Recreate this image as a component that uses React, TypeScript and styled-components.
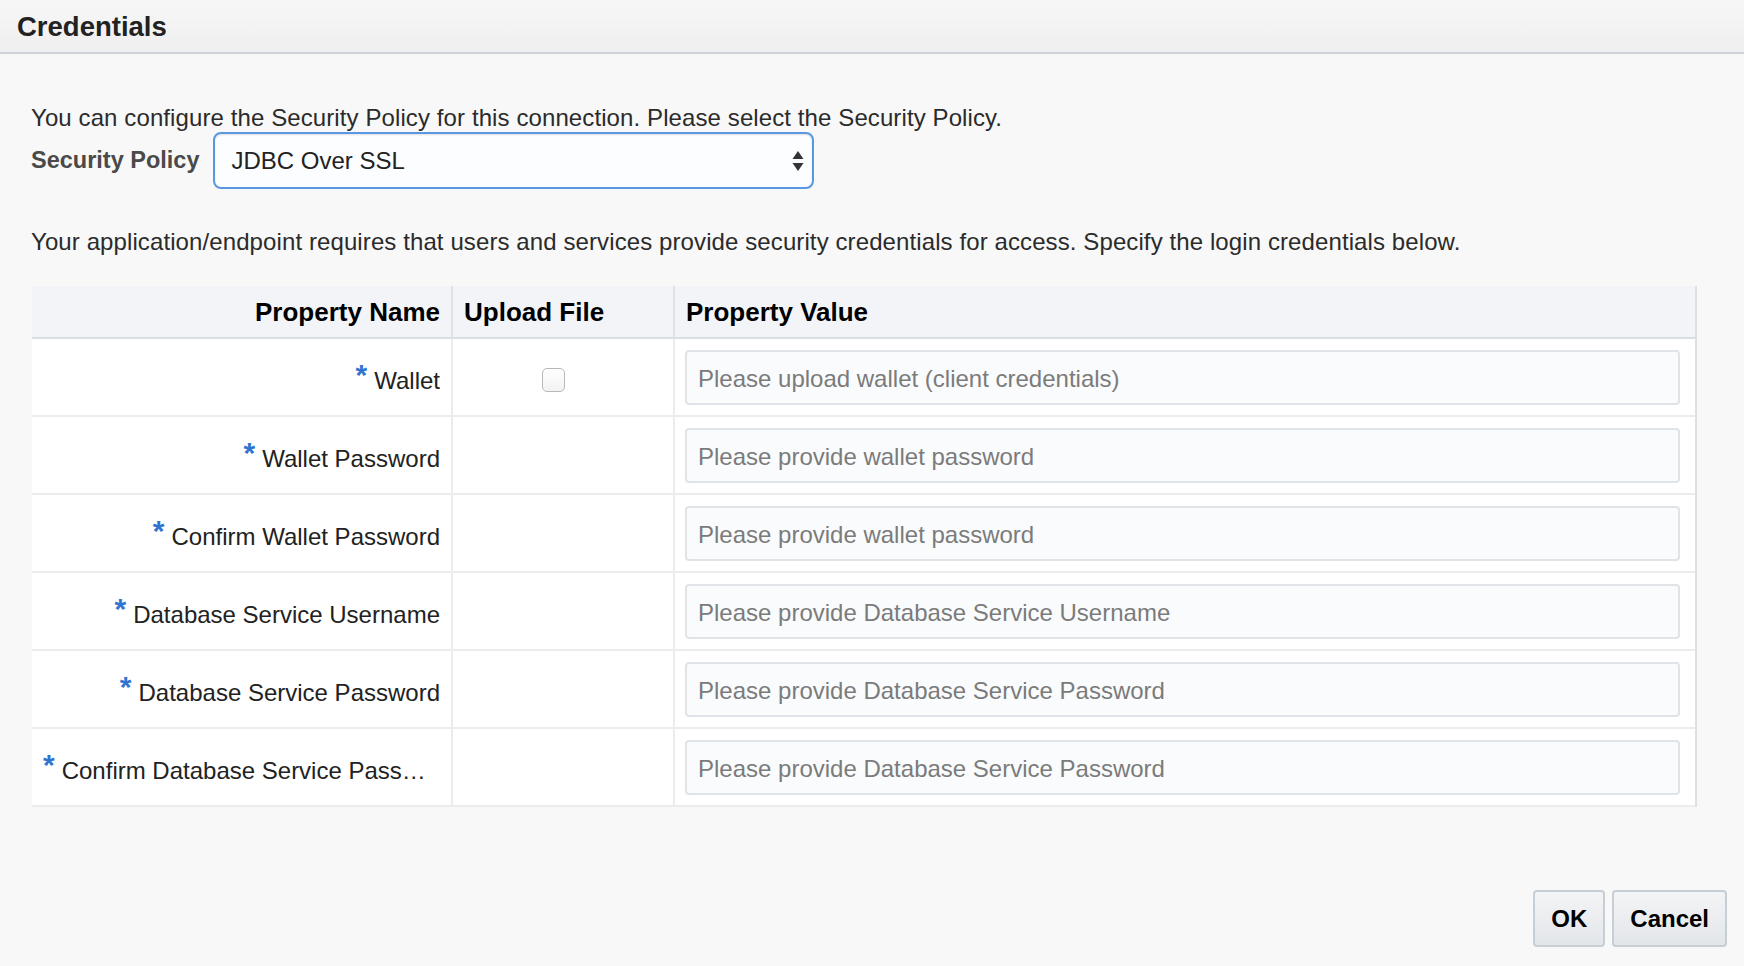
import React from "react";
import styled, { createGlobalStyle } from "styled-components";

const GlobalStyle = createGlobalStyle`
  html, body { margin: 0; padding: 0; }
  body {
    background: #f8f8f8;
    font-family: "Liberation Sans", Arial, Helvetica, sans-serif;
    color: #2b2b2b;
    width: 1744px;
    height: 966px;
    overflow: hidden;
  }
  * { box-sizing: border-box; }
`;

const Page = styled.div`
  display: flex;
  flex-direction: column;
  height: 966px;
`;

const Header = styled.header`
  height: 54px;
  flex: none;
  display: flex;
  align-items: center;
  padding: 1px 0 0 17px;
  background: linear-gradient(#f7f7f7, #efefef);
  border-bottom: 2px solid #cdd3d8;
`;

const Title = styled.h1`
  margin: 0;
  font-size: 27.5px;
  font-weight: 700;
  color: #222;
`;

const Body = styled.main`
  flex: 1;
  display: flex;
  flex-direction: column;
  padding: 50px 47px 0 31px;
`;

const Para = styled.p<{ $mt?: number }>`
  margin: ${(p) => p.$mt ?? 0}px 0 0 0;
  font-size: 24px;
  line-height: 27px;
  letter-spacing: 0.1px;
  color: #2b2b2b;
  white-space: nowrap;
`;

const PolicyRow = styled.div`
  display: flex;
  align-items: center;
  gap: 13px;
  margin-top: 1px;
`;

const PolicyLabel = styled.label`
  font-size: 23.5px;
  font-weight: 700;
  color: #4a4a4a;
`;

const SelectBox = styled.div`
  width: 601px;
  height: 57px;
  display: flex;
  align-items: center;
  justify-content: space-between;
  padding: 0 8px 0 17px;
  background: #fcfdfe;
  border: 2px solid #5a97e2;
  border-radius: 8px;
  box-shadow: inset 0 1px 2px rgba(0, 0, 0, 0.12);
  font-size: 24px;
  color: #222;
`;

const Table = styled.div`
  margin-top: 31px;
  margin-left: 1px;
  display: grid;
  grid-template-columns: 421px 222px 1fr;
  border-right: 2px solid #dde1e6;
`;

const HeadCell = styled.div<{ $align?: string; $last?: boolean }>`
  height: 53px;
  display: flex;
  align-items: center;
  justify-content: ${(p) => p.$align ?? "flex-start"};
  padding: 2px 11px 0;
  background: #f2f4f7;
  border-bottom: 2px solid #d9dee3;
  border-right: ${(p) => (p.$last ? "none" : "2px solid #dde2e7")};
  font-size: 26px;
  font-weight: 700;
  color: #000;
  white-space: nowrap;
`;

const Cell = styled.div<{ $last?: boolean }>`
  height: 78px;
  display: flex;
  align-items: center;
  padding: 0 11px;
  background: #fff;
  border-bottom: 2px solid #ececec;
  border-right: ${(p) => (p.$last ? "none" : "2px solid #ececec")};
  min-width: 0;
`;

const NameCell = styled(Cell)`
  justify-content: flex-end;
  padding-top: 8px;
`;

const Star = styled.span`
  flex: none;
  color: #2f74d0;
  font-weight: 700;
  font-size: 30px;
  line-height: 20px;
  position: relative;
  top: -6px;
  margin-right: 7px;
`;

const Label = styled.span`
  display: block;
  min-width: 0;
  font-size: 24px;
  line-height: 30px;
  color: #222;
  white-space: nowrap;
  overflow: hidden;
  text-overflow: ellipsis;
`;

const CheckCell = styled(Cell)`
  justify-content: center;
  padding-right: 31px;
  padding-top: 6px;
`;

const Check = styled.input`
  appearance: none;
  margin: 0;
  width: 23px;
  height: 24px;
  border: 1px solid #b8b8b8;
  border-radius: 5px;
  background: linear-gradient(#ffffff, #f2f2f2);
`;

const ValueCell = styled(Cell)`
  padding: 1px 15px 0 10px;
`;

const Input = styled.input`
  width: 100%;
  height: 55px;
  padding: 3px 11px 0;
  border: 2px solid #e0e3e7;
  border-radius: 4px;
  background: #fafbfd;
  font-family: inherit;
  font-size: 24px;
  color: #222;
  outline: none;
  &::placeholder {
    color: #7b7b7b;
  }
`;

const Footer = styled.div`
  margin-top: auto;
  display: flex;
  justify-content: flex-end;
  gap: 7px;
  padding: 0 17px 19px 0;
  margin-right: -47px;
`;

const Button = styled.button`
  height: 57px;
  padding: 0 16px;
  border: 2px solid #c6ced6;
  border-radius: 4px;
  background: linear-gradient(#f3f4f6, #e3e6e9);
  font-family: inherit;
  font-size: 24px;
  font-weight: 700;
  color: #000;
`;

const rows: { name: string; ph: string; upload?: boolean }[] = [
  { name: "Wallet", ph: "Please upload wallet (client credentials)", upload: true },
  { name: "Wallet Password", ph: "Please provide wallet password" },
  { name: "Confirm Wallet Password", ph: "Please provide wallet password" },
  { name: "Database Service Username", ph: "Please provide Database Service Username" },
  { name: "Database Service Password", ph: "Please provide Database Service Password" },
  { name: "Confirm Database Service Password", ph: "Please provide Database Service Password" },
];

export default function App() {
  return (
    <Page>
      <GlobalStyle />
      <Header>
        <Title>Credentials</Title>
      </Header>
      <Body>
        <Para>
          You can configure the Security Policy for this connection. Please select the Security Policy.
        </Para>
        <PolicyRow>
          <PolicyLabel>Security Policy</PolicyLabel>
          <SelectBox>
            <span>JDBC Over SSL</span>
            <svg width="12" height="22" viewBox="0 0 12 22">
              <path d="M6 1 L11.5 9 L0.5 9 Z" fill="#333" />
              <path d="M6 21 L11.5 13 L0.5 13 Z" fill="#333" />
            </svg>
          </SelectBox>
        </PolicyRow>
        <Para $mt={39}>
          Your application/endpoint requires that users and services provide security credentials for access. Specify the login credentials below.
        </Para>
        <Table>
          <HeadCell $align="flex-end">Property Name</HeadCell>
          <HeadCell>Upload File</HeadCell>
          <HeadCell $last>Property Value</HeadCell>
          {rows.map((r) => (
            <React.Fragment key={r.name}>
              <NameCell>
                <Star>*</Star>
                <Label>{r.name}</Label>
              </NameCell>
              <CheckCell>{r.upload ? <Check type="checkbox" /> : null}</CheckCell>
              <ValueCell $last>
                <Input placeholder={r.ph} />
              </ValueCell>
            </React.Fragment>
          ))}
        </Table>
        <Footer>
          <Button>OK</Button>
          <Button>Cancel</Button>
        </Footer>
      </Body>
    </Page>
  );
}
